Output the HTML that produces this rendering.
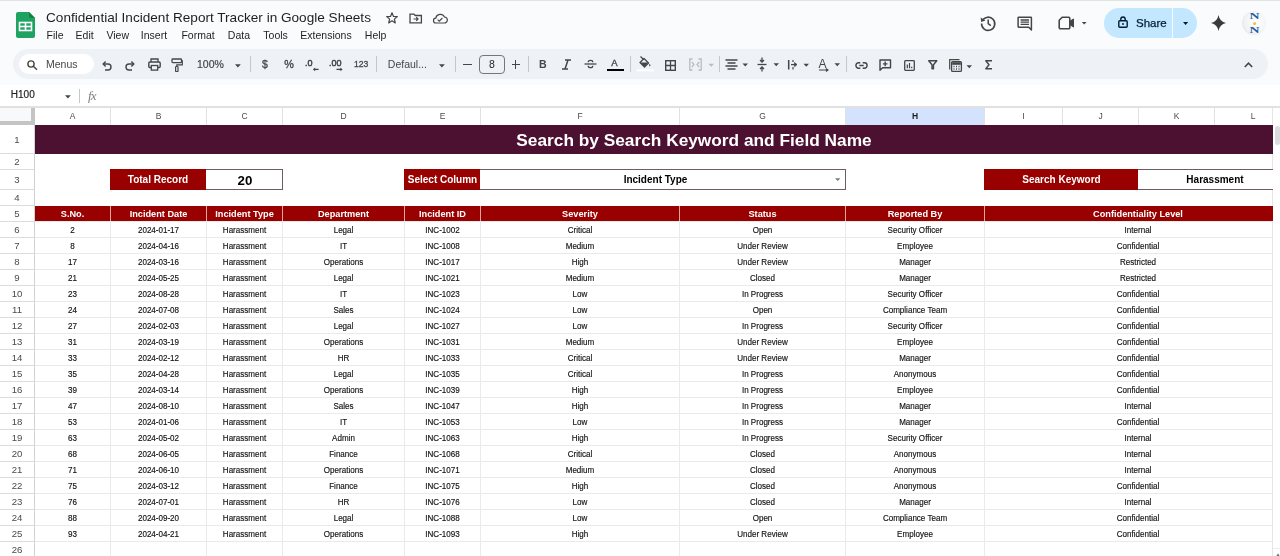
<!DOCTYPE html>
<html><head><meta charset="utf-8"><style>
html,body{margin:0;padding:0;}
body{width:1280px;height:556px;overflow:hidden;position:relative;background:#fff;font-family:"Liberation Sans", sans-serif;}
.t{position:absolute;white-space:nowrap;filter:grayscale(1);}
.r{position:absolute;}
svg.r{overflow:visible;}
</style></head><body>
<div class="r" style="left:0px;top:0px;width:1280px;height:85px;background:#f9fbfd;"></div>
<div class="r" style="left:0px;top:0px;width:1280px;height:1px;background:#e3e4e6;"></div>
<svg class="r" style="left:16px;top:12px;" width="19" height="26" viewBox="0 0 19 26"><path d="M2 0 H13 L19 6 V24 a2 2 0 0 1 -2 2 H2 a2 2 0 0 1 -2 -2 V2 a2 2 0 0 1 2 -2z" fill="#1ea362"/><path d="M13 0 L19 6 H15 a2 2 0 0 1 -2 -2z" fill="#188038"/><rect x="3.5" y="10.5" width="12" height="8" fill="none" stroke="#fff" stroke-width="1.6"/><line x1="3.5" y1="14.5" x2="15.5" y2="14.5" stroke="#fff" stroke-width="1.6"/><line x1="9.5" y1="10.5" x2="9.5" y2="18.5" stroke="#fff" stroke-width="1.6"/></svg>
<div class="t" style="left:46px;top:11.08px;font-size:13.6px;line-height:13.6px;color:#1f1f1f;font-weight:400;">Confidential Incident Report Tracker in Google Sheets</div>
<svg class="r" style="left:386px;top:12px;" width="12" height="12" viewBox="0 0 12 12"><path d="M6 0.8 L7.5 4.4 L11.3 4.6 L8.4 7.1 L9.3 10.9 L6 8.8 L2.7 10.9 L3.6 7.1 L0.7 4.6 L4.5 4.4z" fill="none" stroke="#444746" stroke-width="1.2" stroke-linejoin="round"/></svg>
<svg class="r" style="left:409px;top:13px;" width="14" height="11" viewBox="0 0 14 11"><path d="M1 1.2 H5 L6.3 2.5 H12.4 V9.8 H1z" fill="none" stroke="#444746" stroke-width="1.3"/><path d="M4.5 6 H9 M7.2 4.2 L9 6 L7.2 7.8" fill="none" stroke="#444746" stroke-width="1.2"/></svg>
<svg class="r" style="left:432px;top:13px;" width="16" height="11" viewBox="0 0 16 11"><path d="M4 10 H12.2 a3 3 0 0 0 0.3 -6 a4.6 4.6 0 0 0 -8.7 1.2 a2.4 2.4 0 0 0 0.2 4.8z" fill="none" stroke="#444746" stroke-width="1.2"/><path d="M5.6 6.6 L7.3 8.2 L10.4 5" fill="none" stroke="#444746" stroke-width="1.1"/></svg>
<div class="t" style="left:46.6px;top:29.71px;font-size:10.5px;line-height:10.5px;color:#1f1f1f;font-weight:400;">File</div>
<div class="t" style="left:75.6px;top:29.71px;font-size:10.5px;line-height:10.5px;color:#1f1f1f;font-weight:400;">Edit</div>
<div class="t" style="left:106.4px;top:29.71px;font-size:10.5px;line-height:10.5px;color:#1f1f1f;font-weight:400;">View</div>
<div class="t" style="left:140.8px;top:29.71px;font-size:10.5px;line-height:10.5px;color:#1f1f1f;font-weight:400;">Insert</div>
<div class="t" style="left:181.4px;top:29.71px;font-size:10.5px;line-height:10.5px;color:#1f1f1f;font-weight:400;">Format</div>
<div class="t" style="left:227.8px;top:29.71px;font-size:10.5px;line-height:10.5px;color:#1f1f1f;font-weight:400;">Data</div>
<div class="t" style="left:263.3px;top:29.71px;font-size:10.5px;line-height:10.5px;color:#1f1f1f;font-weight:400;">Tools</div>
<div class="t" style="left:300.3px;top:29.71px;font-size:10.5px;line-height:10.5px;color:#1f1f1f;font-weight:400;">Extensions</div>
<div class="t" style="left:364.8px;top:29.71px;font-size:10.5px;line-height:10.5px;color:#1f1f1f;font-weight:400;">Help</div>
<svg class="r" style="left:980px;top:14.6px;" width="16" height="16" viewBox="0 0 16 16"><path d="M2.4 5.6 A6.6 6.6 0 1 1 1.6 8.5" fill="none" stroke="#444746" stroke-width="1.6"/><path d="M0.6 2.6 L1.2 7 L5.4 5.6z" fill="#444746"/><path d="M8.2 4.6 V8.6 L10.8 10.6" fill="none" stroke="#444746" stroke-width="1.5"/></svg>
<svg class="r" style="left:1017px;top:16px;" width="16" height="15" viewBox="0 0 16 15"><path d="M1.7 1.2 H13.8 a0.6 0.6 0 0 1 0.6 0.6 V14 L11.8 11.2 H1.7 a0.6 0.6 0 0 1 -0.6 -0.6 V1.8 a0.6 0.6 0 0 1 0.6 -0.6z" fill="none" stroke="#444746" stroke-width="1.5" stroke-linejoin="round"/><path d="M3.6 4 H12 M3.6 6.2 H12 M3.6 8.4 H12" stroke="#444746" stroke-width="1.3"/></svg>
<svg class="r" style="left:1057.5px;top:16px;" width="30" height="15" viewBox="0 0 30 15"><path d="M4.2 1.2 H10.6 a1.2 1.2 0 0 1 1.2 1.2 V11.6 a1.2 1.2 0 0 1 -1.2 1.2 H2.4 a1.2 1.2 0 0 1 -1.2 -1.2 V4.2z" fill="none" stroke="#444746" stroke-width="1.6" stroke-linejoin="round"/><path d="M11.8 5.6 L15.4 3.2 V10.8 L11.8 8.4z" fill="#444746" stroke="#444746" stroke-width="1.2" stroke-linejoin="round"/><path d="M23.8 6 H28.6 L26.2 8.6z" fill="#444746"/></svg>
<div class="r" style="left:1104px;top:8px;width:93px;height:30px;border-radius:15px;background:#c2e7ff"></div>
<div class="r" style="left:1172px;top:8px;width:1px;height:30px;background:#f4fbff;"></div>
<svg class="r" style="left:1118px;top:16.4px;" width="10" height="12" viewBox="0 0 10 12"><rect x="0.8" y="4.8" width="8.4" height="6.4" rx="0.9" fill="none" stroke="#001d35" stroke-width="1.4"/><path d="M2.8 4.8 V3.2 a2.2 2.2 0 0 1 4.4 0 V4.8" fill="none" stroke="#001d35" stroke-width="1.4"/><circle cx="5" cy="8" r="0.9" fill="#001d35"/></svg>
<div class="t" style="left:1136px;top:17.86px;font-size:11.5px;line-height:11.5px;color:#001d35;font-weight:400;filter:brightness(1);-webkit-text-stroke:0.25px #001d35;">Share</div>
<svg class="r" style="left:1182.6px;top:22.2px;" width="5.5" height="3.2" viewBox="0 0 5.5 3.2"><path d="M0 0 H5.2 L2.6 2.9z" fill="#001d35"/></svg>
<svg class="r" style="left:1210.5px;top:15px;" width="15" height="16" viewBox="0 0 15 16"><path d="M7.5 0 Q8.6 6.6 15 8 Q8.6 9.4 7.5 16 Q6.4 9.4 0 8 Q6.4 6.6 7.5 0z" fill="#3a3a3a"/></svg>
<div class="r" style="left:1242px;top:11px;width:24px;height:24px;border-radius:50%;background:radial-gradient(circle at 60% 45%,#fff 0,#f2f2f2 60%,#d9d9d9 100%)"></div>
<svg class="r" style="left:1249px;top:13px;" width="11" height="21" viewBox="0 0 11 21"><text x="0.5" y="6" textLength="10" lengthAdjust="spacingAndGlyphs" font-family="Liberation Serif" font-weight="700" font-size="7.2" fill="#1b5fa8">N</text><text x="0.5" y="20" textLength="10" lengthAdjust="spacingAndGlyphs" font-family="Liberation Serif" font-weight="700" font-size="7.2" fill="#1b5fa8">N</text><circle cx="5.6" cy="10.4" r="1.5" fill="#f2c12e"/></svg>
<div class="r" style="left:13px;top:49px;width:1255px;height:30px;border-radius:15px;background:#eef2f7"></div>
<div class="r" style="left:19px;top:54px;width:75px;height:20px;border-radius:10px;background:#fff"></div>
<svg class="r" style="left:27px;top:60px;" width="11" height="10" viewBox="0 0 11 10"><circle cx="4" cy="4" r="3.1" fill="none" stroke="#444746" stroke-width="1.4"/><path d="M6.3 6.3 L10 9.8" stroke="#444746" stroke-width="1.5"/></svg>
<div class="t" style="left:46px;top:58.91px;font-size:10.5px;line-height:10.5px;color:#444746;font-weight:400;">Menus</div>
<svg class="r" style="left:102px;top:61px;" width="10" height="9" viewBox="0 0 10 9"><path d="M1.5 3 H6 a3 3 0 0 1 0 6 H3" fill="none" stroke="#444746" stroke-width="1.4"/><path d="M3.6 0.6 L1.2 3 L3.6 5.4" fill="none" stroke="#444746" stroke-width="1.4"/></svg>
<svg class="r" style="left:125px;top:61px;" width="10" height="9" viewBox="0 0 10 9"><path d="M8.5 3 H4 a3 3 0 0 0 0 6 H7" fill="none" stroke="#444746" stroke-width="1.4"/><path d="M6.4 0.6 L8.8 3 L6.4 5.4" fill="none" stroke="#444746" stroke-width="1.4"/></svg>
<svg class="r" style="left:148px;top:58px;" width="13" height="13" viewBox="0 0 13 13"><path d="M3 4 V1 H10 V4" fill="none" stroke="#444746" stroke-width="1.3"/><rect x="0.8" y="4" width="11.4" height="5.5" rx="1.2" fill="none" stroke="#444746" stroke-width="1.4"/><rect x="3.3" y="7.5" width="6.4" height="4.6" fill="#eef2f7" stroke="#444746" stroke-width="1.3"/></svg>
<svg class="r" style="left:171px;top:58px;" width="12" height="14" viewBox="0 0 12 14"><rect x="1" y="1" width="9.5" height="3.6" rx="0.8" fill="none" stroke="#444746" stroke-width="1.3"/><path d="M10.5 2.8 H11.3 V6.8 H5.8 V8.5" fill="none" stroke="#444746" stroke-width="1.2"/><rect x="4.6" y="8.5" width="2.4" height="5" rx="0.6" fill="none" stroke="#444746" stroke-width="1.2"/></svg>
<div class="t" style="left:197px;top:59.41px;font-size:10.5px;line-height:10.5px;color:#444746;font-weight:400;-webkit-text-stroke:0.2px #444746;">100%</div>
<svg class="r" style="left:234.5px;top:63.6px;" width="6" height="4" viewBox="0 0 6 4"><path d="M0 0.2 H5.8 L2.9 3.4z" fill="#444746"/></svg>
<div class="r" style="left:250px;top:56px;width:1px;height:16px;background:#c7c7c7;"></div>
<div class="t" style="left:262px;top:59.41px;font-size:10.5px;line-height:10.5px;color:#444746;font-weight:400;-webkit-text-stroke:0.3px #444746;">$</div>
<div class="t" style="left:284.2px;top:58.66px;font-size:10.8px;line-height:10.8px;color:#444746;font-weight:400;-webkit-text-stroke:0.35px #444746;">%</div>
<svg class="r" style="left:305px;top:58px;filter:grayscale(1);" width="14" height="14" viewBox="0 0 14 14"><text x="0" y="8" font-family="Liberation Sans" font-size="9" stroke="#444746" stroke-width="0.5" fill="#444746">.0</text><path d="M13.6 11.4 H8.5" stroke="#444746" stroke-width="1.3"/><path d="M10.2 9.6 L8 11.4 L10.2 13.2z" fill="#444746"/></svg>
<svg class="r" style="left:329px;top:58px;filter:grayscale(1);" width="16" height="14" viewBox="0 0 16 14"><text x="0" y="8" font-family="Liberation Sans" font-size="9" stroke="#444746" stroke-width="0.5" fill="#444746">.00</text><path d="M7.5 11.4 H12.5" stroke="#444746" stroke-width="1.3"/><path d="M11.4 9.6 L13.6 11.4 L11.4 13.2z" fill="#444746"/></svg>
<div class="t" style="left:354px;top:60.12px;font-size:8.6px;line-height:8.6px;color:#444746;font-weight:400;-webkit-text-stroke:0.3px #444746;">123</div>
<div class="r" style="left:376px;top:56px;width:1px;height:16px;background:#c7c7c7;"></div>
<div class="t" style="left:387.8px;top:59.11px;font-size:10.5px;line-height:10.5px;color:#444746;font-weight:400;">Defaul...</div>
<svg class="r" style="left:438.5px;top:63.6px;" width="6" height="4" viewBox="0 0 6 4"><path d="M0 0.2 H5.8 L2.9 3.4z" fill="#444746"/></svg>
<div class="r" style="left:455px;top:56px;width:1px;height:16px;background:#c7c7c7;"></div>
<div class="r" style="left:463px;top:64px;width:9px;height:1.4px;background:#444746;"></div>
<div class="r" style="left:479px;top:55px;width:24px;height:17px;border:1px solid #747775;border-radius:4px;box-sizing:content-box"></div>
<div class="t" style="left:480px;width:24px;text-align:center;top:59.11px;font-size:10.5px;line-height:10.5px;color:#1f1f1f;font-weight:400;">8</div>
<div class="r" style="left:511.5px;top:64px;width:8.5px;height:1.4px;background:#444746;"></div>
<div class="r" style="left:515.1px;top:60.4px;width:1.4px;height:8.5px;background:#444746;"></div>
<div class="r" style="left:528px;top:56px;width:1px;height:16px;background:#c7c7c7;"></div>
<div class="t" style="left:539px;top:59.22px;font-size:10.6px;line-height:10.6px;color:#444746;font-weight:700;">B</div>
<svg class="r" style="left:562px;top:59px;" width="9" height="11" viewBox="0 0 9 11"><path d="M3 1 H9 M0 10 H6 M6 1 L3 10" fill="none" stroke="#444746" stroke-width="1.5"/></svg>
<svg class="r" style="left:584px;top:58px;" width="13" height="13" viewBox="0 0 13 13"><path d="M0.5 6 H12.5" stroke="#444746" stroke-width="1.3"/><path d="M8.8 4.2 C8.8 3 7.9 2.3 6.5 2.3 C5.1 2.3 4.2 3 4.2 4.2" fill="none" stroke="#444746" stroke-width="1.3"/><path d="M4.2 7.8 C4.2 9 5.1 9.7 6.5 9.7 C7.9 9.7 8.8 9 8.8 7.8" fill="none" stroke="#444746" stroke-width="1.3"/></svg>
<div class="t" style="left:606px;width:17px;text-align:center;top:58.36px;font-size:9.5px;line-height:9.5px;color:#444746;font-weight:400;-webkit-text-stroke:0.35px #444746;">A</div>
<div class="r" style="left:606.5px;top:68.6px;width:17px;height:2.4px;background:#000;"></div>
<div class="r" style="left:630px;top:56px;width:1px;height:16px;background:#c7c7c7;"></div>
<svg class="r" style="left:638px;top:56px;" width="16" height="16" viewBox="0 0 16 16"><path d="M2.5 0.5 L5.5 3.5" stroke="#444746" stroke-width="1.3"/><path d="M6 2.5 L10.5 7 L6.5 11 L2 6.5z" fill="none" stroke="#444746" stroke-width="1.3" stroke-linejoin="round"/><path d="M2 6.5 H10.5 L6.5 11z" fill="#444746"/><path d="M11.8 7.8 C11 9 10.8 9.7 11.8 10.4 C12.8 9.7 12.6 9 11.8 7.8z" fill="#444746"/><rect x="-1.5" y="13.3" width="17.5" height="2" fill="#fff"/></svg>
<svg class="r" style="left:665px;top:60px;" width="11" height="11" viewBox="0 0 11 11"><rect x="0.7" y="0.7" width="9.6" height="9.6" fill="none" stroke="#444746" stroke-width="1.4"/><path d="M5.5 0.7 V10.3 M0.7 5.5 H10.3" stroke="#444746" stroke-width="1.3"/></svg>
<svg class="r" style="left:689px;top:58px;" width="26" height="13" viewBox="0 0 26 13"><path d="M3.5 1 H0.8 V12 H3.5 M9.5 1 H12.2 V12 H9.5" fill="none" stroke="#b9bbbd" stroke-width="1.3"/><path d="M2.8 4 L5 6.5 L2.8 9 M10.2 4 L8 6.5 L10.2 9" fill="none" stroke="#b9bbbd" stroke-width="1.2"/><path d="M19.5 5.8 H25 L22.25 8.8z" fill="#b9bbbd"/></svg>
<div class="r" style="left:719px;top:56px;width:1px;height:16px;background:#c7c7c7;"></div>
<svg class="r" style="left:725px;top:59px;" width="24" height="11" viewBox="0 0 24 11"><path d="M0.5 1 H12.5 M2.5 4 H10.5 M0.5 7 H12.5 M2.5 10 H10.5" stroke="#444746" stroke-width="1.3"/><path d="M17.5 4.5 H23 L20.25 7.5z" fill="#444746"/></svg>
<svg class="r" style="left:757px;top:57px;" width="23" height="15" viewBox="0 0 23 15"><path d="M0.5 7.5 H9.5" stroke="#444746" stroke-width="1.3"/><path d="M5 0.5 V5 M3 3 L5 5 L7 3 M5 14.5 V10 M3 12 L5 10 L7 12" fill="none" stroke="#444746" stroke-width="1.3"/><path d="M16.5 6.3 H22 L19.25 9.3z" fill="#444746"/></svg>
<svg class="r" style="left:787px;top:58px;" width="23" height="13" viewBox="0 0 23 13"><path d="M1.7 2 V11.5" stroke="#444746" stroke-width="1.5"/><path d="M6 2 V4 M6 9 V11.5" stroke="#444746" stroke-width="1.2"/><path d="M4 6.6 H8.5" stroke="#444746" stroke-width="1.3"/><path d="M7.6 4.6 L10 6.6 L7.6 8.6z" fill="#444746" stroke="#444746" stroke-width="0.8"/><path d="M16.5 5.8 H22 L19.25 8.8z" fill="#444746"/></svg>
<svg class="r" style="left:818px;top:57px;filter:grayscale(1);" width="23" height="15" viewBox="0 0 23 15"><text x="0.5" y="11" font-family="Liberation Sans" font-size="12" fill="#444746">A</text><path d="M1 13 H10 M8 11.5 L10 13 L8 14.5" fill="none" stroke="#444746" stroke-width="1.1"/><path d="M16.5 6.3 H22 L19.25 9.3z" fill="#444746"/></svg>
<div class="r" style="left:846px;top:56px;width:1px;height:16px;background:#c7c7c7;"></div>
<svg class="r" style="left:854.5px;top:61.5px;" width="13" height="7" viewBox="0 0 13 7"><path d="M5.3 0.8 H3.6 a2.7 2.7 0 0 0 0 5.4 H5.3 M7.7 0.8 H9.4 a2.7 2.7 0 0 1 0 5.4 H7.7 M4.3 3.5 H8.7" fill="none" stroke="#444746" stroke-width="1.4"/></svg>
<svg class="r" style="left:879px;top:59px;" width="13" height="12" viewBox="0 0 13 12"><path d="M1 1 H11.5 V8.8 H3.6 L1 11.2z" fill="none" stroke="#444746" stroke-width="1.4" stroke-linejoin="round"/><path d="M6.2 2.6 V7.2 M3.9 4.9 H8.5" stroke="#444746" stroke-width="1.4"/></svg>
<svg class="r" style="left:903.5px;top:59.8px;" width="11" height="11" viewBox="0 0 11 11"><rect x="0.7" y="0.7" width="9.6" height="9.6" rx="0.8" fill="none" stroke="#444746" stroke-width="1.3"/><path d="M3.3 8.2 V4.6 M5.5 8.2 V3 M7.7 8.2 V6.8" stroke="#444746" stroke-width="1.2"/></svg>
<svg class="r" style="left:928px;top:60.3px;" width="9.5" height="9.5" viewBox="0 0 9.5 9.5"><path d="M0.7 0.8 H8.8 L5.5 4.8 V8.8 H4 V4.8z" fill="none" stroke="#444746" stroke-width="1.4" stroke-linejoin="round"/></svg>
<svg class="r" style="left:948.5px;top:58.5px;" width="24" height="13" viewBox="0 0 24 13"><rect x="2.6" y="2.6" width="9.8" height="9.8" rx="1" fill="none" stroke="#444746" stroke-width="1.3"/><path d="M0.7 10.5 V0.7 H10.5" fill="none" stroke="#444746" stroke-width="1.2"/><rect x="3.2" y="3.2" width="8.6" height="2.6" fill="#444746"/><path d="M4.5 7.5 H5.5 M7 7.5 H8 M9.5 7.5 H10.5 M4.5 10 H5.5 M7 10 H8 M9.5 10 H10.5" stroke="#444746" stroke-width="1.3"/><path d="M17.5 6.3 H23 L20.25 9.3z" fill="#444746"/></svg>
<svg class="r" style="left:984.5px;top:60.3px;" width="7.5" height="9.5" viewBox="0 0 7.5 9.5"><path d="M7 0.8 H0.8 L4 4.75 L0.8 8.7 H7" fill="none" stroke="#444746" stroke-width="1.4" stroke-linejoin="round"/></svg>
<svg class="r" style="left:1244px;top:62px;" width="9" height="6" viewBox="0 0 9 6"><path d="M0.8 5 L4.5 1.2 L8.2 5" fill="none" stroke="#444746" stroke-width="1.6"/></svg>
<div class="r" style="left:0px;top:85px;width:1280px;height:21px;background:#fff;"></div>
<div class="t" style="left:10.8px;top:90.43px;font-size:10px;line-height:10px;color:#1f1f1f;font-weight:400;-webkit-text-stroke:0.2px #1f1f1f;">H100</div>
<svg class="r" style="left:64.5px;top:94.6px;" width="6" height="4" viewBox="0 0 6 4"><path d="M0 0.2 H5.8 L2.9 3.4z" fill="#444746"/></svg>
<div class="r" style="left:79px;top:89px;width:1px;height:14px;background:#c7c7c7;"></div>
<div class="t" style="left:88px;top:89.49px;font-size:13px;line-height:13px;color:#7f7f7f;font-weight:400;font-family:'Liberation Serif',serif;letter-spacing:-0.8px;"><i>fx</i></div>
<div class="r" style="left:0px;top:106px;width:1280px;height:450px;background:#fff;"></div>
<div class="r" style="left:0px;top:106px;width:1280px;height:2px;background:#e1e1e1;"></div>
<div class="r" style="left:0px;top:108px;width:31px;height:13px;background:#f8f9fa;"></div>
<div class="r" style="left:31px;top:108px;width:4px;height:17px;background:#c4c4c4;"></div>
<div class="r" style="left:0px;top:121px;width:35px;height:4px;background:#c4c4c4;"></div>
<div class="r" style="left:846px;top:108px;width:138px;height:17px;background:#d3e3fd;"></div>
<div class="r" style="left:110px;top:108px;width:1px;height:17px;background:#e1e1e1;"></div>
<div class="t" style="left:35px;width:75px;text-align:center;top:111.50px;font-size:8.5px;line-height:8.5px;color:#4a4a4a;font-weight:400;">A</div>
<div class="r" style="left:206px;top:108px;width:1px;height:17px;background:#e1e1e1;"></div>
<div class="t" style="left:111px;width:95px;text-align:center;top:111.50px;font-size:8.5px;line-height:8.5px;color:#4a4a4a;font-weight:400;">B</div>
<div class="r" style="left:282px;top:108px;width:1px;height:17px;background:#e1e1e1;"></div>
<div class="t" style="left:207px;width:75px;text-align:center;top:111.50px;font-size:8.5px;line-height:8.5px;color:#4a4a4a;font-weight:400;">C</div>
<div class="r" style="left:404px;top:108px;width:1px;height:17px;background:#e1e1e1;"></div>
<div class="t" style="left:283px;width:121px;text-align:center;top:111.50px;font-size:8.5px;line-height:8.5px;color:#4a4a4a;font-weight:400;">D</div>
<div class="r" style="left:480px;top:108px;width:1px;height:17px;background:#e1e1e1;"></div>
<div class="t" style="left:405px;width:75px;text-align:center;top:111.50px;font-size:8.5px;line-height:8.5px;color:#4a4a4a;font-weight:400;">E</div>
<div class="r" style="left:679px;top:108px;width:1px;height:17px;background:#e1e1e1;"></div>
<div class="t" style="left:481px;width:198px;text-align:center;top:111.50px;font-size:8.5px;line-height:8.5px;color:#4a4a4a;font-weight:400;">F</div>
<div class="r" style="left:845px;top:108px;width:1px;height:17px;background:#e1e1e1;"></div>
<div class="t" style="left:680px;width:165px;text-align:center;top:111.50px;font-size:8.5px;line-height:8.5px;color:#4a4a4a;font-weight:400;">G</div>
<div class="r" style="left:984px;top:108px;width:1px;height:17px;background:#e1e1e1;"></div>
<div class="t" style="left:846px;width:138px;text-align:center;top:111.50px;font-size:8.5px;line-height:8.5px;color:#0b1f44;font-weight:700;">H</div>
<div class="r" style="left:1062px;top:108px;width:1px;height:17px;background:#e1e1e1;"></div>
<div class="t" style="left:985px;width:77px;text-align:center;top:111.50px;font-size:8.5px;line-height:8.5px;color:#4a4a4a;font-weight:400;">I</div>
<div class="r" style="left:1138px;top:108px;width:1px;height:17px;background:#e1e1e1;"></div>
<div class="t" style="left:1063px;width:75px;text-align:center;top:111.50px;font-size:8.5px;line-height:8.5px;color:#4a4a4a;font-weight:400;">J</div>
<div class="r" style="left:1214px;top:108px;width:1px;height:17px;background:#e1e1e1;"></div>
<div class="t" style="left:1139px;width:75px;text-align:center;top:111.50px;font-size:8.5px;line-height:8.5px;color:#4a4a4a;font-weight:400;">K</div>
<div class="r" style="left:1272px;top:108px;width:1px;height:17px;background:#e1e1e1;"></div>
<div class="t" style="left:1215px;width:76px;text-align:center;top:111.50px;font-size:8.5px;line-height:8.5px;color:#4a4a4a;font-weight:400;">L</div>
<div class="r" style="left:110px;top:206px;width:1px;height:350px;background:#e9ebe9;"></div>
<div class="r" style="left:206px;top:206px;width:1px;height:350px;background:#e9ebe9;"></div>
<div class="r" style="left:282px;top:206px;width:1px;height:350px;background:#e9ebe9;"></div>
<div class="r" style="left:404px;top:206px;width:1px;height:350px;background:#e9ebe9;"></div>
<div class="r" style="left:480px;top:206px;width:1px;height:350px;background:#e9ebe9;"></div>
<div class="r" style="left:679px;top:206px;width:1px;height:350px;background:#e9ebe9;"></div>
<div class="r" style="left:845px;top:206px;width:1px;height:350px;background:#e9ebe9;"></div>
<div class="r" style="left:984px;top:206px;width:1px;height:350px;background:#e9ebe9;"></div>
<div class="r" style="left:1272px;top:206px;width:1px;height:350px;background:#e9ebe9;"></div>
<div class="r" style="left:35px;top:221px;width:1238px;height:1px;background:#e9ebe9;"></div>
<div class="r" style="left:35px;top:237px;width:1238px;height:1px;background:#e9ebe9;"></div>
<div class="r" style="left:35px;top:253px;width:1238px;height:1px;background:#e9ebe9;"></div>
<div class="r" style="left:35px;top:269px;width:1238px;height:1px;background:#e9ebe9;"></div>
<div class="r" style="left:35px;top:285px;width:1238px;height:1px;background:#e9ebe9;"></div>
<div class="r" style="left:35px;top:301px;width:1238px;height:1px;background:#e9ebe9;"></div>
<div class="r" style="left:35px;top:317px;width:1238px;height:1px;background:#e9ebe9;"></div>
<div class="r" style="left:35px;top:333px;width:1238px;height:1px;background:#e9ebe9;"></div>
<div class="r" style="left:35px;top:349px;width:1238px;height:1px;background:#e9ebe9;"></div>
<div class="r" style="left:35px;top:365px;width:1238px;height:1px;background:#e9ebe9;"></div>
<div class="r" style="left:35px;top:381px;width:1238px;height:1px;background:#e9ebe9;"></div>
<div class="r" style="left:35px;top:397px;width:1238px;height:1px;background:#e9ebe9;"></div>
<div class="r" style="left:35px;top:413px;width:1238px;height:1px;background:#e9ebe9;"></div>
<div class="r" style="left:35px;top:429px;width:1238px;height:1px;background:#e9ebe9;"></div>
<div class="r" style="left:35px;top:445px;width:1238px;height:1px;background:#e9ebe9;"></div>
<div class="r" style="left:35px;top:461px;width:1238px;height:1px;background:#e9ebe9;"></div>
<div class="r" style="left:35px;top:477px;width:1238px;height:1px;background:#e9ebe9;"></div>
<div class="r" style="left:35px;top:493px;width:1238px;height:1px;background:#e9ebe9;"></div>
<div class="r" style="left:35px;top:509px;width:1238px;height:1px;background:#e9ebe9;"></div>
<div class="r" style="left:35px;top:525px;width:1238px;height:1px;background:#e9ebe9;"></div>
<div class="r" style="left:35px;top:541px;width:1238px;height:1px;background:#e9ebe9;"></div>
<div class="r" style="left:35px;top:557px;width:1238px;height:1px;background:#e9ebe9;"></div>
<div class="r" style="left:0px;top:153px;width:34px;height:1px;background:#dcdcdc;"></div>
<div class="r" style="left:0px;top:169px;width:34px;height:1px;background:#dcdcdc;"></div>
<div class="r" style="left:0px;top:189px;width:34px;height:1px;background:#dcdcdc;"></div>
<div class="r" style="left:0px;top:205px;width:34px;height:1px;background:#dcdcdc;"></div>
<div class="r" style="left:0px;top:221px;width:34px;height:1px;background:#dcdcdc;"></div>
<div class="r" style="left:0px;top:237px;width:34px;height:1px;background:#dcdcdc;"></div>
<div class="r" style="left:0px;top:253px;width:34px;height:1px;background:#dcdcdc;"></div>
<div class="r" style="left:0px;top:269px;width:34px;height:1px;background:#dcdcdc;"></div>
<div class="r" style="left:0px;top:285px;width:34px;height:1px;background:#dcdcdc;"></div>
<div class="r" style="left:0px;top:301px;width:34px;height:1px;background:#dcdcdc;"></div>
<div class="r" style="left:0px;top:317px;width:34px;height:1px;background:#dcdcdc;"></div>
<div class="r" style="left:0px;top:333px;width:34px;height:1px;background:#dcdcdc;"></div>
<div class="r" style="left:0px;top:349px;width:34px;height:1px;background:#dcdcdc;"></div>
<div class="r" style="left:0px;top:365px;width:34px;height:1px;background:#dcdcdc;"></div>
<div class="r" style="left:0px;top:381px;width:34px;height:1px;background:#dcdcdc;"></div>
<div class="r" style="left:0px;top:397px;width:34px;height:1px;background:#dcdcdc;"></div>
<div class="r" style="left:0px;top:413px;width:34px;height:1px;background:#dcdcdc;"></div>
<div class="r" style="left:0px;top:429px;width:34px;height:1px;background:#dcdcdc;"></div>
<div class="r" style="left:0px;top:445px;width:34px;height:1px;background:#dcdcdc;"></div>
<div class="r" style="left:0px;top:461px;width:34px;height:1px;background:#dcdcdc;"></div>
<div class="r" style="left:0px;top:477px;width:34px;height:1px;background:#dcdcdc;"></div>
<div class="r" style="left:0px;top:493px;width:34px;height:1px;background:#dcdcdc;"></div>
<div class="r" style="left:0px;top:509px;width:34px;height:1px;background:#dcdcdc;"></div>
<div class="r" style="left:0px;top:525px;width:34px;height:1px;background:#dcdcdc;"></div>
<div class="r" style="left:0px;top:541px;width:34px;height:1px;background:#dcdcdc;"></div>
<div class="r" style="left:0px;top:557px;width:34px;height:1px;background:#dcdcdc;"></div>
<div class="r" style="left:34px;top:125px;width:1px;height:431px;background:#d2d2d2;"></div>
<div class="t" style="left:0px;width:34px;text-align:center;top:134.77px;font-size:9.6px;line-height:9.6px;color:#4a4a4a;font-weight:400;">1</div>
<div class="t" style="left:0px;width:34px;text-align:center;top:157.27px;font-size:9.6px;line-height:9.6px;color:#4a4a4a;font-weight:400;">2</div>
<div class="t" style="left:0px;width:34px;text-align:center;top:175.27px;font-size:9.6px;line-height:9.6px;color:#4a4a4a;font-weight:400;">3</div>
<div class="t" style="left:0px;width:34px;text-align:center;top:193.27px;font-size:9.6px;line-height:9.6px;color:#4a4a4a;font-weight:400;">4</div>
<div class="t" style="left:0px;width:34px;text-align:center;top:209.27px;font-size:9.6px;line-height:9.6px;color:#4a4a4a;font-weight:400;">5</div>
<div class="t" style="left:0px;width:34px;text-align:center;top:225.27px;font-size:9.6px;line-height:9.6px;color:#4a4a4a;font-weight:400;">6</div>
<div class="t" style="left:0px;width:34px;text-align:center;top:241.27px;font-size:9.6px;line-height:9.6px;color:#4a4a4a;font-weight:400;">7</div>
<div class="t" style="left:0px;width:34px;text-align:center;top:257.27px;font-size:9.6px;line-height:9.6px;color:#4a4a4a;font-weight:400;">8</div>
<div class="t" style="left:0px;width:34px;text-align:center;top:273.27px;font-size:9.6px;line-height:9.6px;color:#4a4a4a;font-weight:400;">9</div>
<div class="t" style="left:0px;width:34px;text-align:center;top:289.27px;font-size:9.6px;line-height:9.6px;color:#4a4a4a;font-weight:400;">10</div>
<div class="t" style="left:0px;width:34px;text-align:center;top:305.27px;font-size:9.6px;line-height:9.6px;color:#4a4a4a;font-weight:400;">11</div>
<div class="t" style="left:0px;width:34px;text-align:center;top:321.27px;font-size:9.6px;line-height:9.6px;color:#4a4a4a;font-weight:400;">12</div>
<div class="t" style="left:0px;width:34px;text-align:center;top:337.27px;font-size:9.6px;line-height:9.6px;color:#4a4a4a;font-weight:400;">13</div>
<div class="t" style="left:0px;width:34px;text-align:center;top:353.27px;font-size:9.6px;line-height:9.6px;color:#4a4a4a;font-weight:400;">14</div>
<div class="t" style="left:0px;width:34px;text-align:center;top:369.27px;font-size:9.6px;line-height:9.6px;color:#4a4a4a;font-weight:400;">15</div>
<div class="t" style="left:0px;width:34px;text-align:center;top:385.27px;font-size:9.6px;line-height:9.6px;color:#4a4a4a;font-weight:400;">16</div>
<div class="t" style="left:0px;width:34px;text-align:center;top:401.27px;font-size:9.6px;line-height:9.6px;color:#4a4a4a;font-weight:400;">17</div>
<div class="t" style="left:0px;width:34px;text-align:center;top:417.27px;font-size:9.6px;line-height:9.6px;color:#4a4a4a;font-weight:400;">18</div>
<div class="t" style="left:0px;width:34px;text-align:center;top:433.27px;font-size:9.6px;line-height:9.6px;color:#4a4a4a;font-weight:400;">19</div>
<div class="t" style="left:0px;width:34px;text-align:center;top:449.27px;font-size:9.6px;line-height:9.6px;color:#4a4a4a;font-weight:400;">20</div>
<div class="t" style="left:0px;width:34px;text-align:center;top:465.27px;font-size:9.6px;line-height:9.6px;color:#4a4a4a;font-weight:400;">21</div>
<div class="t" style="left:0px;width:34px;text-align:center;top:481.27px;font-size:9.6px;line-height:9.6px;color:#4a4a4a;font-weight:400;">22</div>
<div class="t" style="left:0px;width:34px;text-align:center;top:497.27px;font-size:9.6px;line-height:9.6px;color:#4a4a4a;font-weight:400;">23</div>
<div class="t" style="left:0px;width:34px;text-align:center;top:513.27px;font-size:9.6px;line-height:9.6px;color:#4a4a4a;font-weight:400;">24</div>
<div class="t" style="left:0px;width:34px;text-align:center;top:529.27px;font-size:9.6px;line-height:9.6px;color:#4a4a4a;font-weight:400;">25</div>
<div class="t" style="left:0px;width:34px;text-align:center;top:545.27px;font-size:9.6px;line-height:9.6px;color:#4a4a4a;font-weight:400;">26</div>
<div class="r" style="left:1273px;top:108px;width:7px;height:448px;background:#fff;"></div>
<div class="r" style="left:1272px;top:108px;width:1px;height:448px;background:#e5e5e5;"></div>
<div class="r" style="left:1275px;top:126px;width:5px;height:19px;border-radius:3px;background:#dadce0"></div>
<div class="r" style="left:1273px;top:548px;width:7px;height:1px;background:#ececec;"></div>
<svg class="r" style="left:1275.5px;top:552.5px;" width="4" height="3.5" viewBox="0 0 4 3.5"><path d="M0 3.5 L2 0.3 L4 3.5z" fill="#777"/></svg>
<div class="r" style="left:35px;top:125px;width:1238px;height:29px;background:#4c1130;"></div>
<div class="t" style="left:35px;width:1318px;text-align:center;top:131.65px;font-size:17.3px;line-height:17.3px;color:#fff;font-weight:700;">Search by Search Keyword and Field Name</div>
<div class="r" style="left:110px;top:169px;width:97px;height:21px;background:#990000;"></div>
<div class="t" style="left:110px;width:96px;text-align:center;top:175.33px;font-size:10px;line-height:10px;color:#fff;font-weight:700;">Total Record</div>
<div class="r" style="left:206px;top:169px;width:76px;height:20px;border:1px solid #6e5c60;border-left:none;background:#fff;box-sizing:border-box;width:77px;height:21px"></div>
<div class="t" style="left:207px;width:76px;text-align:center;top:174.34px;font-size:13.3px;line-height:13.3px;color:#000;font-weight:700;">20</div>
<div class="r" style="left:404px;top:169px;width:77px;height:21px;background:#990000;"></div>
<div class="t" style="left:404px;width:77px;text-align:center;top:175.33px;font-size:10px;line-height:10px;color:#fff;font-weight:700;">Select Column</div>
<div class="r" style="left:480px;top:169px;width:366px;height:21px;border:1px solid #6e5c60;border-left:none;background:#fff;box-sizing:border-box"></div>
<div class="t" style="left:481px;width:349px;text-align:center;top:175.13px;font-size:10px;line-height:10px;color:#000;font-weight:700;">Incident Type</div>
<svg class="r" style="left:834.6px;top:178px;" width="5.5" height="3.5" viewBox="0 0 5.5 3.5"><path d="M0 0.2 H5.4 L2.7 3.1z" fill="#7a7a7a"/></svg>
<div class="r" style="left:984px;top:169px;width:155px;height:21px;background:#990000;"></div>
<div class="t" style="left:984px;width:155px;text-align:center;top:175.33px;font-size:10px;line-height:10px;color:#fff;font-weight:700;">Search Keyword</div>
<div class="r" style="left:1138px;top:169px;width:135px;height:21px;border:1px solid #6e5c60;border-left:none;border-right:none;background:#fff;box-sizing:border-box"></div>
<div class="t" style="left:1139px;width:152px;text-align:center;top:175.33px;font-size:10px;line-height:10px;color:#000;font-weight:700;">Harassment</div>
<div class="r" style="left:35px;top:206px;width:1238px;height:15px;background:#990000;"></div>
<div class="r" style="left:110px;top:206px;width:1px;height:15px;background:#e9a3a3;"></div>
<div class="t" style="left:35px;width:75px;text-align:center;top:209.61px;font-size:9.2px;line-height:9.2px;color:#fff;font-weight:700;">S.No.</div>
<div class="r" style="left:206px;top:206px;width:1px;height:15px;background:#e9a3a3;"></div>
<div class="t" style="left:111px;width:95px;text-align:center;top:209.61px;font-size:9.2px;line-height:9.2px;color:#fff;font-weight:700;">Incident Date</div>
<div class="r" style="left:282px;top:206px;width:1px;height:15px;background:#e9a3a3;"></div>
<div class="t" style="left:207px;width:75px;text-align:center;top:209.61px;font-size:9.2px;line-height:9.2px;color:#fff;font-weight:700;">Incident Type</div>
<div class="r" style="left:404px;top:206px;width:1px;height:15px;background:#e9a3a3;"></div>
<div class="t" style="left:283px;width:121px;text-align:center;top:209.61px;font-size:9.2px;line-height:9.2px;color:#fff;font-weight:700;">Department</div>
<div class="r" style="left:480px;top:206px;width:1px;height:15px;background:#e9a3a3;"></div>
<div class="t" style="left:405px;width:75px;text-align:center;top:209.61px;font-size:9.2px;line-height:9.2px;color:#fff;font-weight:700;">Incident ID</div>
<div class="r" style="left:679px;top:206px;width:1px;height:15px;background:#e9a3a3;"></div>
<div class="t" style="left:481px;width:198px;text-align:center;top:209.61px;font-size:9.2px;line-height:9.2px;color:#fff;font-weight:700;">Severity</div>
<div class="r" style="left:845px;top:206px;width:1px;height:15px;background:#e9a3a3;"></div>
<div class="t" style="left:680px;width:165px;text-align:center;top:209.61px;font-size:9.2px;line-height:9.2px;color:#fff;font-weight:700;">Status</div>
<div class="r" style="left:984px;top:206px;width:1px;height:15px;background:#e9a3a3;"></div>
<div class="t" style="left:846px;width:138px;text-align:center;top:209.61px;font-size:9.2px;line-height:9.2px;color:#fff;font-weight:700;">Reported By</div>
<div class="t" style="left:985px;width:306px;text-align:center;top:209.61px;font-size:9.2px;line-height:9.2px;color:#fff;font-weight:700;">Confidentiality Level</div>
<div class="t" style="left:35px;width:75px;text-align:center;top:226.09px;font-size:8.4px;line-height:8.4px;color:#111;font-weight:400;transform:scaleX(0.96);-webkit-text-stroke:0.15px #111;">2</div>
<div class="t" style="left:111px;width:95px;text-align:center;top:226.09px;font-size:8.4px;line-height:8.4px;color:#111;font-weight:400;transform:scaleX(0.96);-webkit-text-stroke:0.15px #111;">2024-01-17</div>
<div class="t" style="left:207px;width:75px;text-align:center;top:226.09px;font-size:8.4px;line-height:8.4px;color:#111;font-weight:400;transform:scaleX(0.96);-webkit-text-stroke:0.15px #111;">Harassment</div>
<div class="t" style="left:283px;width:121px;text-align:center;top:226.09px;font-size:8.4px;line-height:8.4px;color:#111;font-weight:400;transform:scaleX(0.96);-webkit-text-stroke:0.15px #111;">Legal</div>
<div class="t" style="left:405px;width:75px;text-align:center;top:226.09px;font-size:8.4px;line-height:8.4px;color:#111;font-weight:400;transform:scaleX(0.96);-webkit-text-stroke:0.15px #111;">INC-1002</div>
<div class="t" style="left:481px;width:198px;text-align:center;top:226.09px;font-size:8.4px;line-height:8.4px;color:#111;font-weight:400;transform:scaleX(0.96);-webkit-text-stroke:0.15px #111;">Critical</div>
<div class="t" style="left:680px;width:165px;text-align:center;top:226.09px;font-size:8.4px;line-height:8.4px;color:#111;font-weight:400;transform:scaleX(0.96);-webkit-text-stroke:0.15px #111;">Open</div>
<div class="t" style="left:846px;width:138px;text-align:center;top:226.09px;font-size:8.4px;line-height:8.4px;color:#111;font-weight:400;transform:scaleX(0.96);-webkit-text-stroke:0.15px #111;">Security Officer</div>
<div class="t" style="left:985px;width:306px;text-align:center;top:226.09px;font-size:8.4px;line-height:8.4px;color:#111;font-weight:400;transform:scaleX(0.96);-webkit-text-stroke:0.15px #111;">Internal</div>
<div class="t" style="left:35px;width:75px;text-align:center;top:242.09px;font-size:8.4px;line-height:8.4px;color:#111;font-weight:400;transform:scaleX(0.96);-webkit-text-stroke:0.15px #111;">8</div>
<div class="t" style="left:111px;width:95px;text-align:center;top:242.09px;font-size:8.4px;line-height:8.4px;color:#111;font-weight:400;transform:scaleX(0.96);-webkit-text-stroke:0.15px #111;">2024-04-16</div>
<div class="t" style="left:207px;width:75px;text-align:center;top:242.09px;font-size:8.4px;line-height:8.4px;color:#111;font-weight:400;transform:scaleX(0.96);-webkit-text-stroke:0.15px #111;">Harassment</div>
<div class="t" style="left:283px;width:121px;text-align:center;top:242.09px;font-size:8.4px;line-height:8.4px;color:#111;font-weight:400;transform:scaleX(0.96);-webkit-text-stroke:0.15px #111;">IT</div>
<div class="t" style="left:405px;width:75px;text-align:center;top:242.09px;font-size:8.4px;line-height:8.4px;color:#111;font-weight:400;transform:scaleX(0.96);-webkit-text-stroke:0.15px #111;">INC-1008</div>
<div class="t" style="left:481px;width:198px;text-align:center;top:242.09px;font-size:8.4px;line-height:8.4px;color:#111;font-weight:400;transform:scaleX(0.96);-webkit-text-stroke:0.15px #111;">Medium</div>
<div class="t" style="left:680px;width:165px;text-align:center;top:242.09px;font-size:8.4px;line-height:8.4px;color:#111;font-weight:400;transform:scaleX(0.96);-webkit-text-stroke:0.15px #111;">Under Review</div>
<div class="t" style="left:846px;width:138px;text-align:center;top:242.09px;font-size:8.4px;line-height:8.4px;color:#111;font-weight:400;transform:scaleX(0.96);-webkit-text-stroke:0.15px #111;">Employee</div>
<div class="t" style="left:985px;width:306px;text-align:center;top:242.09px;font-size:8.4px;line-height:8.4px;color:#111;font-weight:400;transform:scaleX(0.96);-webkit-text-stroke:0.15px #111;">Confidential</div>
<div class="t" style="left:35px;width:75px;text-align:center;top:258.09px;font-size:8.4px;line-height:8.4px;color:#111;font-weight:400;transform:scaleX(0.96);-webkit-text-stroke:0.15px #111;">17</div>
<div class="t" style="left:111px;width:95px;text-align:center;top:258.09px;font-size:8.4px;line-height:8.4px;color:#111;font-weight:400;transform:scaleX(0.96);-webkit-text-stroke:0.15px #111;">2024-03-16</div>
<div class="t" style="left:207px;width:75px;text-align:center;top:258.09px;font-size:8.4px;line-height:8.4px;color:#111;font-weight:400;transform:scaleX(0.96);-webkit-text-stroke:0.15px #111;">Harassment</div>
<div class="t" style="left:283px;width:121px;text-align:center;top:258.09px;font-size:8.4px;line-height:8.4px;color:#111;font-weight:400;transform:scaleX(0.96);-webkit-text-stroke:0.15px #111;">Operations</div>
<div class="t" style="left:405px;width:75px;text-align:center;top:258.09px;font-size:8.4px;line-height:8.4px;color:#111;font-weight:400;transform:scaleX(0.96);-webkit-text-stroke:0.15px #111;">INC-1017</div>
<div class="t" style="left:481px;width:198px;text-align:center;top:258.09px;font-size:8.4px;line-height:8.4px;color:#111;font-weight:400;transform:scaleX(0.96);-webkit-text-stroke:0.15px #111;">High</div>
<div class="t" style="left:680px;width:165px;text-align:center;top:258.09px;font-size:8.4px;line-height:8.4px;color:#111;font-weight:400;transform:scaleX(0.96);-webkit-text-stroke:0.15px #111;">Under Review</div>
<div class="t" style="left:846px;width:138px;text-align:center;top:258.09px;font-size:8.4px;line-height:8.4px;color:#111;font-weight:400;transform:scaleX(0.96);-webkit-text-stroke:0.15px #111;">Manager</div>
<div class="t" style="left:985px;width:306px;text-align:center;top:258.09px;font-size:8.4px;line-height:8.4px;color:#111;font-weight:400;transform:scaleX(0.96);-webkit-text-stroke:0.15px #111;">Restricted</div>
<div class="t" style="left:35px;width:75px;text-align:center;top:274.09px;font-size:8.4px;line-height:8.4px;color:#111;font-weight:400;transform:scaleX(0.96);-webkit-text-stroke:0.15px #111;">21</div>
<div class="t" style="left:111px;width:95px;text-align:center;top:274.09px;font-size:8.4px;line-height:8.4px;color:#111;font-weight:400;transform:scaleX(0.96);-webkit-text-stroke:0.15px #111;">2024-05-25</div>
<div class="t" style="left:207px;width:75px;text-align:center;top:274.09px;font-size:8.4px;line-height:8.4px;color:#111;font-weight:400;transform:scaleX(0.96);-webkit-text-stroke:0.15px #111;">Harassment</div>
<div class="t" style="left:283px;width:121px;text-align:center;top:274.09px;font-size:8.4px;line-height:8.4px;color:#111;font-weight:400;transform:scaleX(0.96);-webkit-text-stroke:0.15px #111;">Legal</div>
<div class="t" style="left:405px;width:75px;text-align:center;top:274.09px;font-size:8.4px;line-height:8.4px;color:#111;font-weight:400;transform:scaleX(0.96);-webkit-text-stroke:0.15px #111;">INC-1021</div>
<div class="t" style="left:481px;width:198px;text-align:center;top:274.09px;font-size:8.4px;line-height:8.4px;color:#111;font-weight:400;transform:scaleX(0.96);-webkit-text-stroke:0.15px #111;">Medium</div>
<div class="t" style="left:680px;width:165px;text-align:center;top:274.09px;font-size:8.4px;line-height:8.4px;color:#111;font-weight:400;transform:scaleX(0.96);-webkit-text-stroke:0.15px #111;">Closed</div>
<div class="t" style="left:846px;width:138px;text-align:center;top:274.09px;font-size:8.4px;line-height:8.4px;color:#111;font-weight:400;transform:scaleX(0.96);-webkit-text-stroke:0.15px #111;">Manager</div>
<div class="t" style="left:985px;width:306px;text-align:center;top:274.09px;font-size:8.4px;line-height:8.4px;color:#111;font-weight:400;transform:scaleX(0.96);-webkit-text-stroke:0.15px #111;">Restricted</div>
<div class="t" style="left:35px;width:75px;text-align:center;top:290.09px;font-size:8.4px;line-height:8.4px;color:#111;font-weight:400;transform:scaleX(0.96);-webkit-text-stroke:0.15px #111;">23</div>
<div class="t" style="left:111px;width:95px;text-align:center;top:290.09px;font-size:8.4px;line-height:8.4px;color:#111;font-weight:400;transform:scaleX(0.96);-webkit-text-stroke:0.15px #111;">2024-08-28</div>
<div class="t" style="left:207px;width:75px;text-align:center;top:290.09px;font-size:8.4px;line-height:8.4px;color:#111;font-weight:400;transform:scaleX(0.96);-webkit-text-stroke:0.15px #111;">Harassment</div>
<div class="t" style="left:283px;width:121px;text-align:center;top:290.09px;font-size:8.4px;line-height:8.4px;color:#111;font-weight:400;transform:scaleX(0.96);-webkit-text-stroke:0.15px #111;">IT</div>
<div class="t" style="left:405px;width:75px;text-align:center;top:290.09px;font-size:8.4px;line-height:8.4px;color:#111;font-weight:400;transform:scaleX(0.96);-webkit-text-stroke:0.15px #111;">INC-1023</div>
<div class="t" style="left:481px;width:198px;text-align:center;top:290.09px;font-size:8.4px;line-height:8.4px;color:#111;font-weight:400;transform:scaleX(0.96);-webkit-text-stroke:0.15px #111;">Low</div>
<div class="t" style="left:680px;width:165px;text-align:center;top:290.09px;font-size:8.4px;line-height:8.4px;color:#111;font-weight:400;transform:scaleX(0.96);-webkit-text-stroke:0.15px #111;">In Progress</div>
<div class="t" style="left:846px;width:138px;text-align:center;top:290.09px;font-size:8.4px;line-height:8.4px;color:#111;font-weight:400;transform:scaleX(0.96);-webkit-text-stroke:0.15px #111;">Security Officer</div>
<div class="t" style="left:985px;width:306px;text-align:center;top:290.09px;font-size:8.4px;line-height:8.4px;color:#111;font-weight:400;transform:scaleX(0.96);-webkit-text-stroke:0.15px #111;">Confidential</div>
<div class="t" style="left:35px;width:75px;text-align:center;top:306.09px;font-size:8.4px;line-height:8.4px;color:#111;font-weight:400;transform:scaleX(0.96);-webkit-text-stroke:0.15px #111;">24</div>
<div class="t" style="left:111px;width:95px;text-align:center;top:306.09px;font-size:8.4px;line-height:8.4px;color:#111;font-weight:400;transform:scaleX(0.96);-webkit-text-stroke:0.15px #111;">2024-07-08</div>
<div class="t" style="left:207px;width:75px;text-align:center;top:306.09px;font-size:8.4px;line-height:8.4px;color:#111;font-weight:400;transform:scaleX(0.96);-webkit-text-stroke:0.15px #111;">Harassment</div>
<div class="t" style="left:283px;width:121px;text-align:center;top:306.09px;font-size:8.4px;line-height:8.4px;color:#111;font-weight:400;transform:scaleX(0.96);-webkit-text-stroke:0.15px #111;">Sales</div>
<div class="t" style="left:405px;width:75px;text-align:center;top:306.09px;font-size:8.4px;line-height:8.4px;color:#111;font-weight:400;transform:scaleX(0.96);-webkit-text-stroke:0.15px #111;">INC-1024</div>
<div class="t" style="left:481px;width:198px;text-align:center;top:306.09px;font-size:8.4px;line-height:8.4px;color:#111;font-weight:400;transform:scaleX(0.96);-webkit-text-stroke:0.15px #111;">Low</div>
<div class="t" style="left:680px;width:165px;text-align:center;top:306.09px;font-size:8.4px;line-height:8.4px;color:#111;font-weight:400;transform:scaleX(0.96);-webkit-text-stroke:0.15px #111;">Open</div>
<div class="t" style="left:846px;width:138px;text-align:center;top:306.09px;font-size:8.4px;line-height:8.4px;color:#111;font-weight:400;transform:scaleX(0.96);-webkit-text-stroke:0.15px #111;">Compliance Team</div>
<div class="t" style="left:985px;width:306px;text-align:center;top:306.09px;font-size:8.4px;line-height:8.4px;color:#111;font-weight:400;transform:scaleX(0.96);-webkit-text-stroke:0.15px #111;">Confidential</div>
<div class="t" style="left:35px;width:75px;text-align:center;top:322.09px;font-size:8.4px;line-height:8.4px;color:#111;font-weight:400;transform:scaleX(0.96);-webkit-text-stroke:0.15px #111;">27</div>
<div class="t" style="left:111px;width:95px;text-align:center;top:322.09px;font-size:8.4px;line-height:8.4px;color:#111;font-weight:400;transform:scaleX(0.96);-webkit-text-stroke:0.15px #111;">2024-02-03</div>
<div class="t" style="left:207px;width:75px;text-align:center;top:322.09px;font-size:8.4px;line-height:8.4px;color:#111;font-weight:400;transform:scaleX(0.96);-webkit-text-stroke:0.15px #111;">Harassment</div>
<div class="t" style="left:283px;width:121px;text-align:center;top:322.09px;font-size:8.4px;line-height:8.4px;color:#111;font-weight:400;transform:scaleX(0.96);-webkit-text-stroke:0.15px #111;">Legal</div>
<div class="t" style="left:405px;width:75px;text-align:center;top:322.09px;font-size:8.4px;line-height:8.4px;color:#111;font-weight:400;transform:scaleX(0.96);-webkit-text-stroke:0.15px #111;">INC-1027</div>
<div class="t" style="left:481px;width:198px;text-align:center;top:322.09px;font-size:8.4px;line-height:8.4px;color:#111;font-weight:400;transform:scaleX(0.96);-webkit-text-stroke:0.15px #111;">Low</div>
<div class="t" style="left:680px;width:165px;text-align:center;top:322.09px;font-size:8.4px;line-height:8.4px;color:#111;font-weight:400;transform:scaleX(0.96);-webkit-text-stroke:0.15px #111;">In Progress</div>
<div class="t" style="left:846px;width:138px;text-align:center;top:322.09px;font-size:8.4px;line-height:8.4px;color:#111;font-weight:400;transform:scaleX(0.96);-webkit-text-stroke:0.15px #111;">Security Officer</div>
<div class="t" style="left:985px;width:306px;text-align:center;top:322.09px;font-size:8.4px;line-height:8.4px;color:#111;font-weight:400;transform:scaleX(0.96);-webkit-text-stroke:0.15px #111;">Confidential</div>
<div class="t" style="left:35px;width:75px;text-align:center;top:338.09px;font-size:8.4px;line-height:8.4px;color:#111;font-weight:400;transform:scaleX(0.96);-webkit-text-stroke:0.15px #111;">31</div>
<div class="t" style="left:111px;width:95px;text-align:center;top:338.09px;font-size:8.4px;line-height:8.4px;color:#111;font-weight:400;transform:scaleX(0.96);-webkit-text-stroke:0.15px #111;">2024-03-19</div>
<div class="t" style="left:207px;width:75px;text-align:center;top:338.09px;font-size:8.4px;line-height:8.4px;color:#111;font-weight:400;transform:scaleX(0.96);-webkit-text-stroke:0.15px #111;">Harassment</div>
<div class="t" style="left:283px;width:121px;text-align:center;top:338.09px;font-size:8.4px;line-height:8.4px;color:#111;font-weight:400;transform:scaleX(0.96);-webkit-text-stroke:0.15px #111;">Operations</div>
<div class="t" style="left:405px;width:75px;text-align:center;top:338.09px;font-size:8.4px;line-height:8.4px;color:#111;font-weight:400;transform:scaleX(0.96);-webkit-text-stroke:0.15px #111;">INC-1031</div>
<div class="t" style="left:481px;width:198px;text-align:center;top:338.09px;font-size:8.4px;line-height:8.4px;color:#111;font-weight:400;transform:scaleX(0.96);-webkit-text-stroke:0.15px #111;">Medium</div>
<div class="t" style="left:680px;width:165px;text-align:center;top:338.09px;font-size:8.4px;line-height:8.4px;color:#111;font-weight:400;transform:scaleX(0.96);-webkit-text-stroke:0.15px #111;">Under Review</div>
<div class="t" style="left:846px;width:138px;text-align:center;top:338.09px;font-size:8.4px;line-height:8.4px;color:#111;font-weight:400;transform:scaleX(0.96);-webkit-text-stroke:0.15px #111;">Employee</div>
<div class="t" style="left:985px;width:306px;text-align:center;top:338.09px;font-size:8.4px;line-height:8.4px;color:#111;font-weight:400;transform:scaleX(0.96);-webkit-text-stroke:0.15px #111;">Confidential</div>
<div class="t" style="left:35px;width:75px;text-align:center;top:354.09px;font-size:8.4px;line-height:8.4px;color:#111;font-weight:400;transform:scaleX(0.96);-webkit-text-stroke:0.15px #111;">33</div>
<div class="t" style="left:111px;width:95px;text-align:center;top:354.09px;font-size:8.4px;line-height:8.4px;color:#111;font-weight:400;transform:scaleX(0.96);-webkit-text-stroke:0.15px #111;">2024-02-12</div>
<div class="t" style="left:207px;width:75px;text-align:center;top:354.09px;font-size:8.4px;line-height:8.4px;color:#111;font-weight:400;transform:scaleX(0.96);-webkit-text-stroke:0.15px #111;">Harassment</div>
<div class="t" style="left:283px;width:121px;text-align:center;top:354.09px;font-size:8.4px;line-height:8.4px;color:#111;font-weight:400;transform:scaleX(0.96);-webkit-text-stroke:0.15px #111;">HR</div>
<div class="t" style="left:405px;width:75px;text-align:center;top:354.09px;font-size:8.4px;line-height:8.4px;color:#111;font-weight:400;transform:scaleX(0.96);-webkit-text-stroke:0.15px #111;">INC-1033</div>
<div class="t" style="left:481px;width:198px;text-align:center;top:354.09px;font-size:8.4px;line-height:8.4px;color:#111;font-weight:400;transform:scaleX(0.96);-webkit-text-stroke:0.15px #111;">Critical</div>
<div class="t" style="left:680px;width:165px;text-align:center;top:354.09px;font-size:8.4px;line-height:8.4px;color:#111;font-weight:400;transform:scaleX(0.96);-webkit-text-stroke:0.15px #111;">Under Review</div>
<div class="t" style="left:846px;width:138px;text-align:center;top:354.09px;font-size:8.4px;line-height:8.4px;color:#111;font-weight:400;transform:scaleX(0.96);-webkit-text-stroke:0.15px #111;">Manager</div>
<div class="t" style="left:985px;width:306px;text-align:center;top:354.09px;font-size:8.4px;line-height:8.4px;color:#111;font-weight:400;transform:scaleX(0.96);-webkit-text-stroke:0.15px #111;">Confidential</div>
<div class="t" style="left:35px;width:75px;text-align:center;top:370.09px;font-size:8.4px;line-height:8.4px;color:#111;font-weight:400;transform:scaleX(0.96);-webkit-text-stroke:0.15px #111;">35</div>
<div class="t" style="left:111px;width:95px;text-align:center;top:370.09px;font-size:8.4px;line-height:8.4px;color:#111;font-weight:400;transform:scaleX(0.96);-webkit-text-stroke:0.15px #111;">2024-04-28</div>
<div class="t" style="left:207px;width:75px;text-align:center;top:370.09px;font-size:8.4px;line-height:8.4px;color:#111;font-weight:400;transform:scaleX(0.96);-webkit-text-stroke:0.15px #111;">Harassment</div>
<div class="t" style="left:283px;width:121px;text-align:center;top:370.09px;font-size:8.4px;line-height:8.4px;color:#111;font-weight:400;transform:scaleX(0.96);-webkit-text-stroke:0.15px #111;">Legal</div>
<div class="t" style="left:405px;width:75px;text-align:center;top:370.09px;font-size:8.4px;line-height:8.4px;color:#111;font-weight:400;transform:scaleX(0.96);-webkit-text-stroke:0.15px #111;">INC-1035</div>
<div class="t" style="left:481px;width:198px;text-align:center;top:370.09px;font-size:8.4px;line-height:8.4px;color:#111;font-weight:400;transform:scaleX(0.96);-webkit-text-stroke:0.15px #111;">Critical</div>
<div class="t" style="left:680px;width:165px;text-align:center;top:370.09px;font-size:8.4px;line-height:8.4px;color:#111;font-weight:400;transform:scaleX(0.96);-webkit-text-stroke:0.15px #111;">In Progress</div>
<div class="t" style="left:846px;width:138px;text-align:center;top:370.09px;font-size:8.4px;line-height:8.4px;color:#111;font-weight:400;transform:scaleX(0.96);-webkit-text-stroke:0.15px #111;">Anonymous</div>
<div class="t" style="left:985px;width:306px;text-align:center;top:370.09px;font-size:8.4px;line-height:8.4px;color:#111;font-weight:400;transform:scaleX(0.96);-webkit-text-stroke:0.15px #111;">Confidential</div>
<div class="t" style="left:35px;width:75px;text-align:center;top:386.09px;font-size:8.4px;line-height:8.4px;color:#111;font-weight:400;transform:scaleX(0.96);-webkit-text-stroke:0.15px #111;">39</div>
<div class="t" style="left:111px;width:95px;text-align:center;top:386.09px;font-size:8.4px;line-height:8.4px;color:#111;font-weight:400;transform:scaleX(0.96);-webkit-text-stroke:0.15px #111;">2024-03-14</div>
<div class="t" style="left:207px;width:75px;text-align:center;top:386.09px;font-size:8.4px;line-height:8.4px;color:#111;font-weight:400;transform:scaleX(0.96);-webkit-text-stroke:0.15px #111;">Harassment</div>
<div class="t" style="left:283px;width:121px;text-align:center;top:386.09px;font-size:8.4px;line-height:8.4px;color:#111;font-weight:400;transform:scaleX(0.96);-webkit-text-stroke:0.15px #111;">Operations</div>
<div class="t" style="left:405px;width:75px;text-align:center;top:386.09px;font-size:8.4px;line-height:8.4px;color:#111;font-weight:400;transform:scaleX(0.96);-webkit-text-stroke:0.15px #111;">INC-1039</div>
<div class="t" style="left:481px;width:198px;text-align:center;top:386.09px;font-size:8.4px;line-height:8.4px;color:#111;font-weight:400;transform:scaleX(0.96);-webkit-text-stroke:0.15px #111;">High</div>
<div class="t" style="left:680px;width:165px;text-align:center;top:386.09px;font-size:8.4px;line-height:8.4px;color:#111;font-weight:400;transform:scaleX(0.96);-webkit-text-stroke:0.15px #111;">In Progress</div>
<div class="t" style="left:846px;width:138px;text-align:center;top:386.09px;font-size:8.4px;line-height:8.4px;color:#111;font-weight:400;transform:scaleX(0.96);-webkit-text-stroke:0.15px #111;">Employee</div>
<div class="t" style="left:985px;width:306px;text-align:center;top:386.09px;font-size:8.4px;line-height:8.4px;color:#111;font-weight:400;transform:scaleX(0.96);-webkit-text-stroke:0.15px #111;">Confidential</div>
<div class="t" style="left:35px;width:75px;text-align:center;top:402.09px;font-size:8.4px;line-height:8.4px;color:#111;font-weight:400;transform:scaleX(0.96);-webkit-text-stroke:0.15px #111;">47</div>
<div class="t" style="left:111px;width:95px;text-align:center;top:402.09px;font-size:8.4px;line-height:8.4px;color:#111;font-weight:400;transform:scaleX(0.96);-webkit-text-stroke:0.15px #111;">2024-08-10</div>
<div class="t" style="left:207px;width:75px;text-align:center;top:402.09px;font-size:8.4px;line-height:8.4px;color:#111;font-weight:400;transform:scaleX(0.96);-webkit-text-stroke:0.15px #111;">Harassment</div>
<div class="t" style="left:283px;width:121px;text-align:center;top:402.09px;font-size:8.4px;line-height:8.4px;color:#111;font-weight:400;transform:scaleX(0.96);-webkit-text-stroke:0.15px #111;">Sales</div>
<div class="t" style="left:405px;width:75px;text-align:center;top:402.09px;font-size:8.4px;line-height:8.4px;color:#111;font-weight:400;transform:scaleX(0.96);-webkit-text-stroke:0.15px #111;">INC-1047</div>
<div class="t" style="left:481px;width:198px;text-align:center;top:402.09px;font-size:8.4px;line-height:8.4px;color:#111;font-weight:400;transform:scaleX(0.96);-webkit-text-stroke:0.15px #111;">High</div>
<div class="t" style="left:680px;width:165px;text-align:center;top:402.09px;font-size:8.4px;line-height:8.4px;color:#111;font-weight:400;transform:scaleX(0.96);-webkit-text-stroke:0.15px #111;">In Progress</div>
<div class="t" style="left:846px;width:138px;text-align:center;top:402.09px;font-size:8.4px;line-height:8.4px;color:#111;font-weight:400;transform:scaleX(0.96);-webkit-text-stroke:0.15px #111;">Manager</div>
<div class="t" style="left:985px;width:306px;text-align:center;top:402.09px;font-size:8.4px;line-height:8.4px;color:#111;font-weight:400;transform:scaleX(0.96);-webkit-text-stroke:0.15px #111;">Internal</div>
<div class="t" style="left:35px;width:75px;text-align:center;top:418.09px;font-size:8.4px;line-height:8.4px;color:#111;font-weight:400;transform:scaleX(0.96);-webkit-text-stroke:0.15px #111;">53</div>
<div class="t" style="left:111px;width:95px;text-align:center;top:418.09px;font-size:8.4px;line-height:8.4px;color:#111;font-weight:400;transform:scaleX(0.96);-webkit-text-stroke:0.15px #111;">2024-01-06</div>
<div class="t" style="left:207px;width:75px;text-align:center;top:418.09px;font-size:8.4px;line-height:8.4px;color:#111;font-weight:400;transform:scaleX(0.96);-webkit-text-stroke:0.15px #111;">Harassment</div>
<div class="t" style="left:283px;width:121px;text-align:center;top:418.09px;font-size:8.4px;line-height:8.4px;color:#111;font-weight:400;transform:scaleX(0.96);-webkit-text-stroke:0.15px #111;">IT</div>
<div class="t" style="left:405px;width:75px;text-align:center;top:418.09px;font-size:8.4px;line-height:8.4px;color:#111;font-weight:400;transform:scaleX(0.96);-webkit-text-stroke:0.15px #111;">INC-1053</div>
<div class="t" style="left:481px;width:198px;text-align:center;top:418.09px;font-size:8.4px;line-height:8.4px;color:#111;font-weight:400;transform:scaleX(0.96);-webkit-text-stroke:0.15px #111;">Low</div>
<div class="t" style="left:680px;width:165px;text-align:center;top:418.09px;font-size:8.4px;line-height:8.4px;color:#111;font-weight:400;transform:scaleX(0.96);-webkit-text-stroke:0.15px #111;">In Progress</div>
<div class="t" style="left:846px;width:138px;text-align:center;top:418.09px;font-size:8.4px;line-height:8.4px;color:#111;font-weight:400;transform:scaleX(0.96);-webkit-text-stroke:0.15px #111;">Manager</div>
<div class="t" style="left:985px;width:306px;text-align:center;top:418.09px;font-size:8.4px;line-height:8.4px;color:#111;font-weight:400;transform:scaleX(0.96);-webkit-text-stroke:0.15px #111;">Confidential</div>
<div class="t" style="left:35px;width:75px;text-align:center;top:434.09px;font-size:8.4px;line-height:8.4px;color:#111;font-weight:400;transform:scaleX(0.96);-webkit-text-stroke:0.15px #111;">63</div>
<div class="t" style="left:111px;width:95px;text-align:center;top:434.09px;font-size:8.4px;line-height:8.4px;color:#111;font-weight:400;transform:scaleX(0.96);-webkit-text-stroke:0.15px #111;">2024-05-02</div>
<div class="t" style="left:207px;width:75px;text-align:center;top:434.09px;font-size:8.4px;line-height:8.4px;color:#111;font-weight:400;transform:scaleX(0.96);-webkit-text-stroke:0.15px #111;">Harassment</div>
<div class="t" style="left:283px;width:121px;text-align:center;top:434.09px;font-size:8.4px;line-height:8.4px;color:#111;font-weight:400;transform:scaleX(0.96);-webkit-text-stroke:0.15px #111;">Admin</div>
<div class="t" style="left:405px;width:75px;text-align:center;top:434.09px;font-size:8.4px;line-height:8.4px;color:#111;font-weight:400;transform:scaleX(0.96);-webkit-text-stroke:0.15px #111;">INC-1063</div>
<div class="t" style="left:481px;width:198px;text-align:center;top:434.09px;font-size:8.4px;line-height:8.4px;color:#111;font-weight:400;transform:scaleX(0.96);-webkit-text-stroke:0.15px #111;">High</div>
<div class="t" style="left:680px;width:165px;text-align:center;top:434.09px;font-size:8.4px;line-height:8.4px;color:#111;font-weight:400;transform:scaleX(0.96);-webkit-text-stroke:0.15px #111;">In Progress</div>
<div class="t" style="left:846px;width:138px;text-align:center;top:434.09px;font-size:8.4px;line-height:8.4px;color:#111;font-weight:400;transform:scaleX(0.96);-webkit-text-stroke:0.15px #111;">Security Officer</div>
<div class="t" style="left:985px;width:306px;text-align:center;top:434.09px;font-size:8.4px;line-height:8.4px;color:#111;font-weight:400;transform:scaleX(0.96);-webkit-text-stroke:0.15px #111;">Internal</div>
<div class="t" style="left:35px;width:75px;text-align:center;top:450.09px;font-size:8.4px;line-height:8.4px;color:#111;font-weight:400;transform:scaleX(0.96);-webkit-text-stroke:0.15px #111;">68</div>
<div class="t" style="left:111px;width:95px;text-align:center;top:450.09px;font-size:8.4px;line-height:8.4px;color:#111;font-weight:400;transform:scaleX(0.96);-webkit-text-stroke:0.15px #111;">2024-06-05</div>
<div class="t" style="left:207px;width:75px;text-align:center;top:450.09px;font-size:8.4px;line-height:8.4px;color:#111;font-weight:400;transform:scaleX(0.96);-webkit-text-stroke:0.15px #111;">Harassment</div>
<div class="t" style="left:283px;width:121px;text-align:center;top:450.09px;font-size:8.4px;line-height:8.4px;color:#111;font-weight:400;transform:scaleX(0.96);-webkit-text-stroke:0.15px #111;">Finance</div>
<div class="t" style="left:405px;width:75px;text-align:center;top:450.09px;font-size:8.4px;line-height:8.4px;color:#111;font-weight:400;transform:scaleX(0.96);-webkit-text-stroke:0.15px #111;">INC-1068</div>
<div class="t" style="left:481px;width:198px;text-align:center;top:450.09px;font-size:8.4px;line-height:8.4px;color:#111;font-weight:400;transform:scaleX(0.96);-webkit-text-stroke:0.15px #111;">Critical</div>
<div class="t" style="left:680px;width:165px;text-align:center;top:450.09px;font-size:8.4px;line-height:8.4px;color:#111;font-weight:400;transform:scaleX(0.96);-webkit-text-stroke:0.15px #111;">Closed</div>
<div class="t" style="left:846px;width:138px;text-align:center;top:450.09px;font-size:8.4px;line-height:8.4px;color:#111;font-weight:400;transform:scaleX(0.96);-webkit-text-stroke:0.15px #111;">Anonymous</div>
<div class="t" style="left:985px;width:306px;text-align:center;top:450.09px;font-size:8.4px;line-height:8.4px;color:#111;font-weight:400;transform:scaleX(0.96);-webkit-text-stroke:0.15px #111;">Internal</div>
<div class="t" style="left:35px;width:75px;text-align:center;top:466.09px;font-size:8.4px;line-height:8.4px;color:#111;font-weight:400;transform:scaleX(0.96);-webkit-text-stroke:0.15px #111;">71</div>
<div class="t" style="left:111px;width:95px;text-align:center;top:466.09px;font-size:8.4px;line-height:8.4px;color:#111;font-weight:400;transform:scaleX(0.96);-webkit-text-stroke:0.15px #111;">2024-06-10</div>
<div class="t" style="left:207px;width:75px;text-align:center;top:466.09px;font-size:8.4px;line-height:8.4px;color:#111;font-weight:400;transform:scaleX(0.96);-webkit-text-stroke:0.15px #111;">Harassment</div>
<div class="t" style="left:283px;width:121px;text-align:center;top:466.09px;font-size:8.4px;line-height:8.4px;color:#111;font-weight:400;transform:scaleX(0.96);-webkit-text-stroke:0.15px #111;">Operations</div>
<div class="t" style="left:405px;width:75px;text-align:center;top:466.09px;font-size:8.4px;line-height:8.4px;color:#111;font-weight:400;transform:scaleX(0.96);-webkit-text-stroke:0.15px #111;">INC-1071</div>
<div class="t" style="left:481px;width:198px;text-align:center;top:466.09px;font-size:8.4px;line-height:8.4px;color:#111;font-weight:400;transform:scaleX(0.96);-webkit-text-stroke:0.15px #111;">Medium</div>
<div class="t" style="left:680px;width:165px;text-align:center;top:466.09px;font-size:8.4px;line-height:8.4px;color:#111;font-weight:400;transform:scaleX(0.96);-webkit-text-stroke:0.15px #111;">Closed</div>
<div class="t" style="left:846px;width:138px;text-align:center;top:466.09px;font-size:8.4px;line-height:8.4px;color:#111;font-weight:400;transform:scaleX(0.96);-webkit-text-stroke:0.15px #111;">Anonymous</div>
<div class="t" style="left:985px;width:306px;text-align:center;top:466.09px;font-size:8.4px;line-height:8.4px;color:#111;font-weight:400;transform:scaleX(0.96);-webkit-text-stroke:0.15px #111;">Internal</div>
<div class="t" style="left:35px;width:75px;text-align:center;top:482.09px;font-size:8.4px;line-height:8.4px;color:#111;font-weight:400;transform:scaleX(0.96);-webkit-text-stroke:0.15px #111;">75</div>
<div class="t" style="left:111px;width:95px;text-align:center;top:482.09px;font-size:8.4px;line-height:8.4px;color:#111;font-weight:400;transform:scaleX(0.96);-webkit-text-stroke:0.15px #111;">2024-03-12</div>
<div class="t" style="left:207px;width:75px;text-align:center;top:482.09px;font-size:8.4px;line-height:8.4px;color:#111;font-weight:400;transform:scaleX(0.96);-webkit-text-stroke:0.15px #111;">Harassment</div>
<div class="t" style="left:283px;width:121px;text-align:center;top:482.09px;font-size:8.4px;line-height:8.4px;color:#111;font-weight:400;transform:scaleX(0.96);-webkit-text-stroke:0.15px #111;">Finance</div>
<div class="t" style="left:405px;width:75px;text-align:center;top:482.09px;font-size:8.4px;line-height:8.4px;color:#111;font-weight:400;transform:scaleX(0.96);-webkit-text-stroke:0.15px #111;">INC-1075</div>
<div class="t" style="left:481px;width:198px;text-align:center;top:482.09px;font-size:8.4px;line-height:8.4px;color:#111;font-weight:400;transform:scaleX(0.96);-webkit-text-stroke:0.15px #111;">High</div>
<div class="t" style="left:680px;width:165px;text-align:center;top:482.09px;font-size:8.4px;line-height:8.4px;color:#111;font-weight:400;transform:scaleX(0.96);-webkit-text-stroke:0.15px #111;">Closed</div>
<div class="t" style="left:846px;width:138px;text-align:center;top:482.09px;font-size:8.4px;line-height:8.4px;color:#111;font-weight:400;transform:scaleX(0.96);-webkit-text-stroke:0.15px #111;">Anonymous</div>
<div class="t" style="left:985px;width:306px;text-align:center;top:482.09px;font-size:8.4px;line-height:8.4px;color:#111;font-weight:400;transform:scaleX(0.96);-webkit-text-stroke:0.15px #111;">Confidential</div>
<div class="t" style="left:35px;width:75px;text-align:center;top:498.09px;font-size:8.4px;line-height:8.4px;color:#111;font-weight:400;transform:scaleX(0.96);-webkit-text-stroke:0.15px #111;">76</div>
<div class="t" style="left:111px;width:95px;text-align:center;top:498.09px;font-size:8.4px;line-height:8.4px;color:#111;font-weight:400;transform:scaleX(0.96);-webkit-text-stroke:0.15px #111;">2024-07-01</div>
<div class="t" style="left:207px;width:75px;text-align:center;top:498.09px;font-size:8.4px;line-height:8.4px;color:#111;font-weight:400;transform:scaleX(0.96);-webkit-text-stroke:0.15px #111;">Harassment</div>
<div class="t" style="left:283px;width:121px;text-align:center;top:498.09px;font-size:8.4px;line-height:8.4px;color:#111;font-weight:400;transform:scaleX(0.96);-webkit-text-stroke:0.15px #111;">HR</div>
<div class="t" style="left:405px;width:75px;text-align:center;top:498.09px;font-size:8.4px;line-height:8.4px;color:#111;font-weight:400;transform:scaleX(0.96);-webkit-text-stroke:0.15px #111;">INC-1076</div>
<div class="t" style="left:481px;width:198px;text-align:center;top:498.09px;font-size:8.4px;line-height:8.4px;color:#111;font-weight:400;transform:scaleX(0.96);-webkit-text-stroke:0.15px #111;">Low</div>
<div class="t" style="left:680px;width:165px;text-align:center;top:498.09px;font-size:8.4px;line-height:8.4px;color:#111;font-weight:400;transform:scaleX(0.96);-webkit-text-stroke:0.15px #111;">Closed</div>
<div class="t" style="left:846px;width:138px;text-align:center;top:498.09px;font-size:8.4px;line-height:8.4px;color:#111;font-weight:400;transform:scaleX(0.96);-webkit-text-stroke:0.15px #111;">Manager</div>
<div class="t" style="left:985px;width:306px;text-align:center;top:498.09px;font-size:8.4px;line-height:8.4px;color:#111;font-weight:400;transform:scaleX(0.96);-webkit-text-stroke:0.15px #111;">Internal</div>
<div class="t" style="left:35px;width:75px;text-align:center;top:514.09px;font-size:8.4px;line-height:8.4px;color:#111;font-weight:400;transform:scaleX(0.96);-webkit-text-stroke:0.15px #111;">88</div>
<div class="t" style="left:111px;width:95px;text-align:center;top:514.09px;font-size:8.4px;line-height:8.4px;color:#111;font-weight:400;transform:scaleX(0.96);-webkit-text-stroke:0.15px #111;">2024-09-20</div>
<div class="t" style="left:207px;width:75px;text-align:center;top:514.09px;font-size:8.4px;line-height:8.4px;color:#111;font-weight:400;transform:scaleX(0.96);-webkit-text-stroke:0.15px #111;">Harassment</div>
<div class="t" style="left:283px;width:121px;text-align:center;top:514.09px;font-size:8.4px;line-height:8.4px;color:#111;font-weight:400;transform:scaleX(0.96);-webkit-text-stroke:0.15px #111;">Legal</div>
<div class="t" style="left:405px;width:75px;text-align:center;top:514.09px;font-size:8.4px;line-height:8.4px;color:#111;font-weight:400;transform:scaleX(0.96);-webkit-text-stroke:0.15px #111;">INC-1088</div>
<div class="t" style="left:481px;width:198px;text-align:center;top:514.09px;font-size:8.4px;line-height:8.4px;color:#111;font-weight:400;transform:scaleX(0.96);-webkit-text-stroke:0.15px #111;">Low</div>
<div class="t" style="left:680px;width:165px;text-align:center;top:514.09px;font-size:8.4px;line-height:8.4px;color:#111;font-weight:400;transform:scaleX(0.96);-webkit-text-stroke:0.15px #111;">Open</div>
<div class="t" style="left:846px;width:138px;text-align:center;top:514.09px;font-size:8.4px;line-height:8.4px;color:#111;font-weight:400;transform:scaleX(0.96);-webkit-text-stroke:0.15px #111;">Compliance Team</div>
<div class="t" style="left:985px;width:306px;text-align:center;top:514.09px;font-size:8.4px;line-height:8.4px;color:#111;font-weight:400;transform:scaleX(0.96);-webkit-text-stroke:0.15px #111;">Confidential</div>
<div class="t" style="left:35px;width:75px;text-align:center;top:530.09px;font-size:8.4px;line-height:8.4px;color:#111;font-weight:400;transform:scaleX(0.96);-webkit-text-stroke:0.15px #111;">93</div>
<div class="t" style="left:111px;width:95px;text-align:center;top:530.09px;font-size:8.4px;line-height:8.4px;color:#111;font-weight:400;transform:scaleX(0.96);-webkit-text-stroke:0.15px #111;">2024-04-21</div>
<div class="t" style="left:207px;width:75px;text-align:center;top:530.09px;font-size:8.4px;line-height:8.4px;color:#111;font-weight:400;transform:scaleX(0.96);-webkit-text-stroke:0.15px #111;">Harassment</div>
<div class="t" style="left:283px;width:121px;text-align:center;top:530.09px;font-size:8.4px;line-height:8.4px;color:#111;font-weight:400;transform:scaleX(0.96);-webkit-text-stroke:0.15px #111;">Operations</div>
<div class="t" style="left:405px;width:75px;text-align:center;top:530.09px;font-size:8.4px;line-height:8.4px;color:#111;font-weight:400;transform:scaleX(0.96);-webkit-text-stroke:0.15px #111;">INC-1093</div>
<div class="t" style="left:481px;width:198px;text-align:center;top:530.09px;font-size:8.4px;line-height:8.4px;color:#111;font-weight:400;transform:scaleX(0.96);-webkit-text-stroke:0.15px #111;">High</div>
<div class="t" style="left:680px;width:165px;text-align:center;top:530.09px;font-size:8.4px;line-height:8.4px;color:#111;font-weight:400;transform:scaleX(0.96);-webkit-text-stroke:0.15px #111;">Under Review</div>
<div class="t" style="left:846px;width:138px;text-align:center;top:530.09px;font-size:8.4px;line-height:8.4px;color:#111;font-weight:400;transform:scaleX(0.96);-webkit-text-stroke:0.15px #111;">Employee</div>
<div class="t" style="left:985px;width:306px;text-align:center;top:530.09px;font-size:8.4px;line-height:8.4px;color:#111;font-weight:400;transform:scaleX(0.96);-webkit-text-stroke:0.15px #111;">Confidential</div>
</body></html>
